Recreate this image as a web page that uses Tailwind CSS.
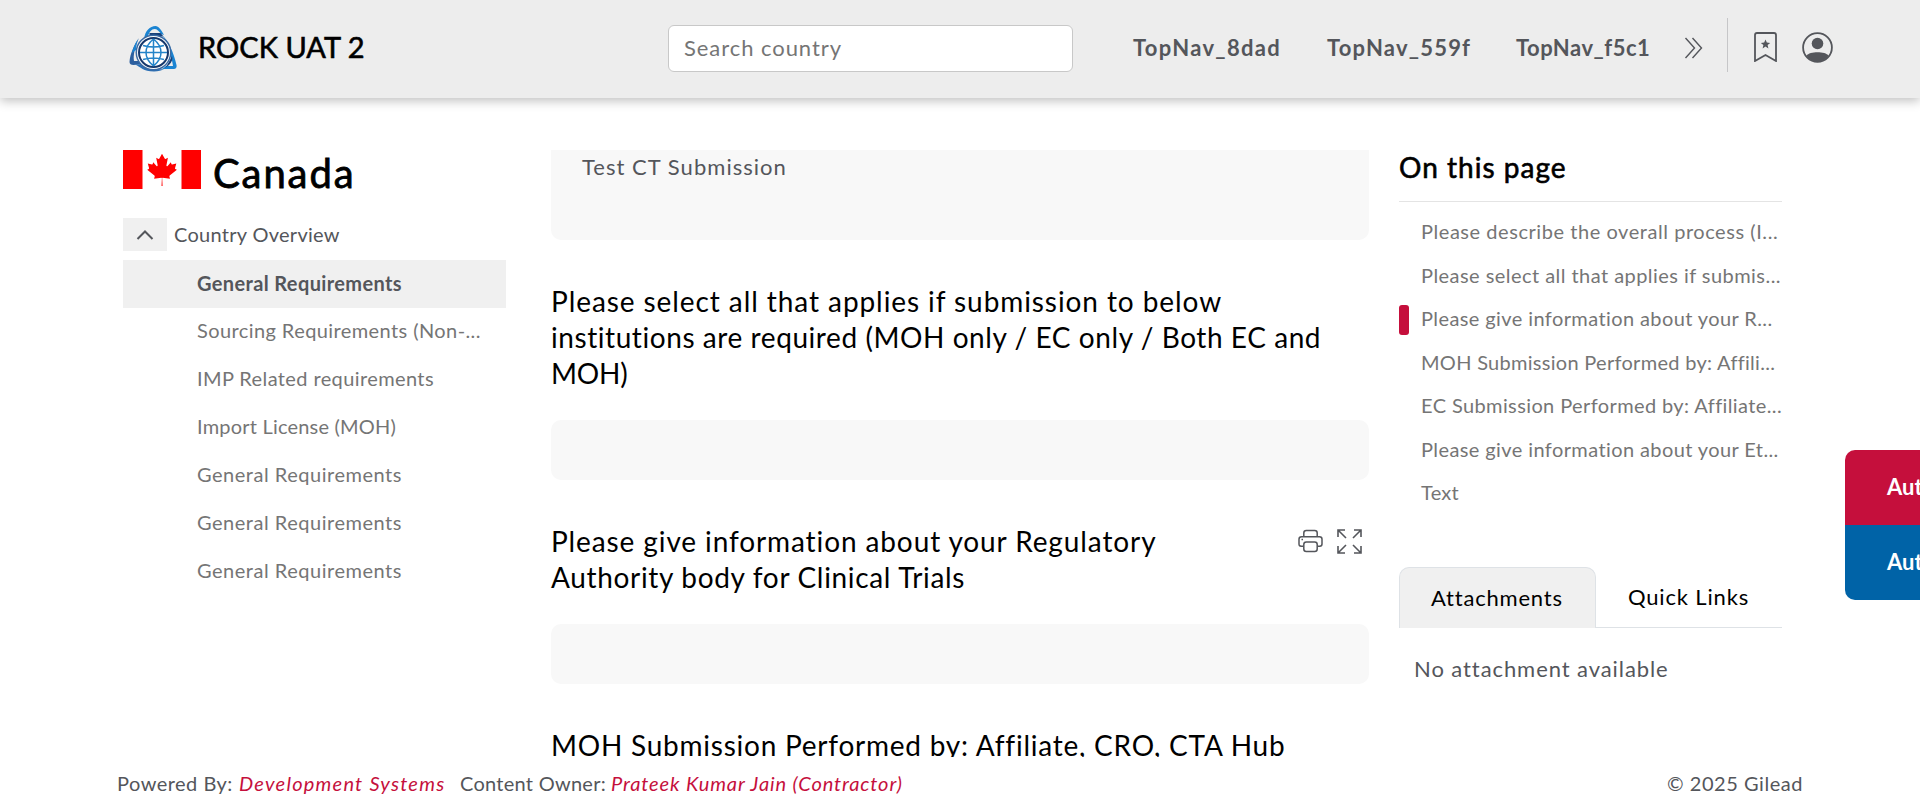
<!DOCTYPE html>
<html lang="en">
<head>
<meta charset="utf-8">
<title>ROCK UAT 2</title>
<script src="https://cdn.jsdelivr.net/npm/@tailwindcss/browser@4"></script>
</head>
<body class="w-[1920px] h-[812px] overflow-hidden bg-white font-['Lato',sans-serif] text-[20px] text-[#54565b] flex flex-col whitespace-nowrap">
<header class="relative z-10 h-[98px] shrink-0 bg-[#ededed] shadow-[0_3px_10px_rgba(0,0,0,0.25)] flex items-start">
  <svg class="w-12 h-[47px] ml-[129px] mt-[25px] shrink-0" viewBox="0 0 48 47" fill="none">
    <path d="M15 14C16 6 21 1 26.500 1c3 0 6 4 8.500 9l-3-1c-2-3-4-5-6.500-5-3 0-5 3-6.500 7z" fill="#1b84d2"/>
    <path d="M20.500 8h11l3 3.500-14-1z" fill="#173f78"/>
    <path d="M10 13C5 20 1 29 .5 37c0 2 1.500 3 4 3l10-1-3-3H5C4 30 6 22 10 13z" fill="#2c5f9f"/>
    <path d="M9 14c-3 5-5 9-6 14l4-3c0-4 1-8 2-11z" fill="#1b84d2"/>
    <path d="M33 10c6 5 12 18 14.500 30 .5 3-1 4-3 4H33l4-3h7c-1-6-2-10-4-14-1-7-4-13-7-17z" fill="#1b84d2"/>
    <path d="M43 31c1 3 0 6-3 9l-4 3c3-4 5-8 7-12z" fill="#173f78"/>
    <path d="M6 39.500C12 42 14 46.500 25 46.500c4 0 8-1 10-2.500-8 1-13-1-18-5z" fill="#2a6fb5"/>
    <circle cx="24.500" cy="27.500" r="17.200" fill="#fff" stroke="#3b6aa3" stroke-width="1.500"/>
    <circle cx="24.500" cy="27.500" r="14.500" stroke="#16386c" stroke-width="2"/>
    <path d="M24.500 14v27M11 27.500h27M14 20.500q10.500 3 21 0M14 34.500q10.500-3 21 0M24.500 14c-10 8-10 19 0 27M24.500 14c10 8 10 19 0 27" stroke="#2484c9" stroke-width="1.500"/>
  </svg>
  <div class="ml-[21px] mt-[30px] leading-[34px] text-[29px] text-black tracking-[0.05px] [-webkit-text-stroke:0.6px]">ROCK UAT 2</div>
  <div class="absolute left-[668px] top-[25px] w-[405px] h-[47px] rounded-md border border-[#c8c8c8] bg-white pl-[15px] leading-[44px] text-[22px] text-[#757575] tracking-[0.94px]">Search country</div>
  <nav class="absolute left-[1133px] top-[26px] h-11 leading-[44px] text-[22px] font-bold flex">
    <a class="w-[194px] tracking-[1.3px]">TopNav_8dad</a><a class="w-[189px] tracking-[1.2px]">TopNav_559f</a><a class="tracking-[0.5px]">TopNav_f5c1</a>
  </nav>
  <svg class="absolute left-[1684px] top-[37px] w-5 h-[22px]" viewBox="0 0 20 22" fill="none" stroke="#54565b" stroke-width="1.400"><path d="M1.500 1l9 10-9 10M8.500 1l9 10-9 10"/></svg>
  <div class="absolute left-[1727px] top-[18px] w-px h-[54px] bg-[#c6c6c8]"></div>
  <svg class="absolute left-[1754px] top-[32px] w-[23px] h-[30px]" viewBox="0 0 23 30"><path d="M1 29V3q0-2 2-2h17q2 0 2 2v26l-10.500-6z" fill="none" stroke="#54565b" stroke-width="1.800"/><path d="M11.500 7.500l1.300 3.100 3.400.3-2.600 2.200.8 3.300-2.900-1.800-2.900 1.800.8-3.300-2.600-2.200 3.400-.3z" fill="#54565b"/></svg>
  <svg class="absolute left-[1802px] top-[32px] w-[31px] h-[31px]" viewBox="0 0 31 31"><circle cx="15.500" cy="15.500" r="14.400" fill="none" stroke="#54565b" stroke-width="1.800"/><circle cx="15.500" cy="11.500" r="5.800" fill="#54565b"/><path d="M4.500 23.500c3-4.500 19-4.500 22 0-4 8-18 8-22 0z" fill="#54565b"/></svg>
</header>
<div class="mt-[52px] h-[607px] shrink-0 flex overflow-hidden">
  <aside class="ml-[123px] w-[383px] shrink-0">
    <div class="flex h-[68px]">
      <svg class="w-[78px] h-[39px]" viewBox="0 0 78 39"><path fill="#fff" d="M0 0h78v39H0z"/><path fill="#f00" d="M0 0h19.500v39H0zM58.500 0H78v39H58.500zM39 3.700l-2.600 4.800c-.3.500-.8.500-1.300.2l-1.900-1 1.400 7.400c.3 1.400-.7 1.400-1.100.8l-3.300-3.700-.5 1.900c-.1.200-.3.500-.7.400l-4.200-.9 1.100 4c.2.900.4 1.200-.2 1.500l-1.500.7 7.200 5.800c.3.200.4.600.3 1l-.6 2.100 7.300-.9c.3 0 .5.200.5.400L38.500 36h1.100l-.4-7.800c0-.2.200-.4.500-.4l7.300.9-.6-2.100c-.1-.4 0-.8.300-1l7.200-5.800-1.500-.7c-.6-.3-.4-.6-.2-1.500l1.100-4-4.200.9c-.4.100-.6-.2-.7-.4l-.5-1.900-3.300 3.700c-.5.600-1.400.6-1.100-.8l1.400-7.400-1.900 1c-.5.300-1 .3-1.300-.2z"/></svg>
      <h1 class="ml-3 h-12 leading-[46px] text-[40px] text-black tracking-[1.9px] [-webkit-text-stroke:0.8px]">Canada</h1>
    </div>
    <div class="flex h-[33px]">
      <div class="w-11 h-[33px] bg-[#f0f0f0] flex items-center justify-center"><svg class="w-[18px] h-3" viewBox="0 0 18 12" fill="none" stroke="#54565b" stroke-width="2"><path d="M1.500 10L9 2.500l7.500 7.500"/></svg></div>
      <div class="ml-[7px] leading-[32px] tracking-[0.29px]">Country Overview</div>
    </div>
    <ul class="mt-[9px] leading-[46px] text-[#757575] *:h-12 *:pl-[74px]">
      <li class="bg-[#f0f0f0] font-bold text-[#54565b] tracking-[0.37px]">General Requirements</li>
      <li class="leading-[45px] tracking-[0.41px]">Sourcing Requirements (Non-...</li>
      <li class="leading-[45px] tracking-[0.39px]">IMP Related requirements</li>
      <li class="leading-[45px] tracking-[0.2px]">Import License (MOH)</li>
      <li class="leading-[45px] tracking-[0.52px]">General Requirements</li>
      <li class="leading-[45px] tracking-[0.52px]">General Requirements</li>
      <li class="leading-[45px] tracking-[0.52px]">General Requirements</li>
    </ul>
  </aside>
  <main class="ml-[45px] w-[818px] shrink-0 text-[28px] leading-9 text-black">
    <div class="h-[90px] rounded-b-[10px] bg-[#f8f8f8] pl-[31px] text-[22px] text-[#54565b] leading-[34px] tracking-[1.03px]">Test CT Submission</div>
    <h2 class="mt-[43px]"><span class="tracking-[0.92px]">Please select all that applies if submission to below</span><br><span class="tracking-[0.57px]">institutions are required (MOH only / EC only / Both EC and</span><br><span class="tracking-[-0.2px]">MOH)</span></h2>
    <div class="mt-[29px] h-[60px] rounded-[10px] bg-[#f8f8f8]"></div>
    <div class="mt-[43px] flex">
      <h2 class="w-[747px]"><span class="tracking-[0.89px]">Please give information about your Regulatory</span><br><span class="tracking-[0.67px]">Authority body for Clinical Trials</span></h2>
      <svg class="w-[25px] h-6 mt-[6px]" viewBox="0 0 25 24" fill="none" stroke="#54565b" stroke-width="1.500"><path d="M5.800 7.500V4q0-2.500 2.500-2.500h8.400q2.500 0 2.500 2.500v3.500M5.500 17.200H3.200q-2.200 0-2.200-2.200v-4.700q0-2.500 2.500-2.500h18q2.500 0 2.500 2.500V15q0 2.200-2.200 2.200h-2.300"/><rect x="5.800" y="13" width="13.400" height="9.500" rx="2.500"/><path d="M3.500 10.500h1.500"/></svg>
      <svg class="ml-[14px] w-[25px] h-[25px] mt-[5.5px]" viewBox="0 0 25 25" fill="none" stroke="#54565b" stroke-width="1.600"><path d="M1 8V1h7M1 1l8 8M17 1h7v7M24 1l-8 8M1 17v7h7M1 24l8-8M24 17v7h-7M24 24l-8-8"/></svg>
    </div>
    <div class="mt-[29px] h-[60px] rounded-[10px] bg-[#f8f8f8]"></div>
    <h2 class="mt-[43px] tracking-[0.76px]">MOH Submission Performed by: Affiliate, CRO, CTA Hub</h2>
  </main>
  <aside class="ml-[30px] w-[383px] shrink-0">
    <h2 class="h-[52px] border-b border-[#e4e4e4] leading-[34px] text-[28px] text-black tracking-[1.02px] [-webkit-text-stroke:0.6px]">On this page</h2>
    <ul class="mt-[8px] leading-[42px] text-[#757575] *:h-[43.5px] *:pl-[22px]">
      <li class="tracking-[0.55px]">Please describe the overall process (I...</li>
      <li class="tracking-[0.45px]">Please select all that applies if submis...</li>
      <li class="relative tracking-[0.4px]"><i class="absolute left-0 top-[8px] w-[10px] h-[30px] rounded-[3px] bg-[#c50f3c]"></i>Please give information about your R...</li>
      <li class="tracking-[0.29px]">MOH Submission Performed by: Affili...</li>
      <li class="tracking-[0.39px]">EC Submission Performed by: Affiliate...</li>
      <li class="tracking-[0.4px]">Please give information about your Et...</li>
      <li class="tracking-[0.27px]">Text</li>
    </ul>
    <div class="mt-[52px] flex h-[61px] text-[22px] leading-[59px] text-black">
      <div class="w-[197px] h-[61px] rounded-t-[10px] border border-b-0 border-[#dee2e6] bg-[#f0f0f0] pl-[31px] tracking-[0.8px]">Attachments</div>
      <div class="grow h-[61px] border-b border-[#dee2e6] pl-8 tracking-[0.83px]">Quick Links</div>
    </div>
    <div class="ml-[15px] mt-[24px] text-[22px] leading-[34px] tracking-[0.92px]">No attachment available</div>
  </aside>
</div>
<footer class="h-[55px] px-[117px] flex justify-between leading-[53px]">
  <div class="flex"><span class="w-[122px] tracking-[0.48px]">Powered By:</span><i class="w-[221px] text-[#c50f3c] tracking-[1.25px]">Development Systems</i><span class="w-[151px] tracking-[0.27px]">Content Owner:</span><i class="text-[#c50f3c] tracking-[0.9px]">Prateek Kumar Jain (Contractor)</i></div>
  <span class="tracking-[0.54px]">© 2025 Gilead</span>
</footer>
<div class="absolute left-[1845px] top-[450px] w-[75px] rounded-l-[10px] overflow-hidden text-[22px] font-bold text-white leading-[73px] *:h-[75px] *:pl-[42px]">
  <div class="bg-[#c50f3c]">Auto</div><div class="bg-[#0063a7]">Auto</div>
</div>
</body>
</html>
